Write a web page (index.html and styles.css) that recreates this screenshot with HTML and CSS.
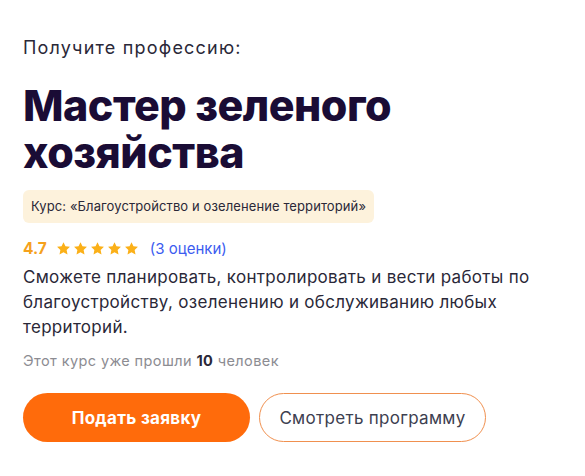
FILE: index.html
```html
<!DOCTYPE html>
<html lang="ru">
<head>
<meta charset="utf-8">
<link rel="stylesheet" href="styles.css">
</head>
<body>
<main class="hero">
  <p class="eyebrow">Получите профессию:</p>
  <h1 class="title">Мастер зеленого хозяйства</h1>
  <div class="badge">Курс: «Благоустройство и озеленение территорий»</div>
  <div class="rating">
    <span class="score">4.7</span>
    <span class="stars">
      <svg viewBox="0 0 24 24"><path d="M12 1.8l3.1 6.6 7.2.9-5.3 5 1.4 7.1L12 17.9l-6.4 3.5 1.4-7.1-5.3-5 7.2-.9z"/></svg>
      <svg viewBox="0 0 24 24"><path d="M12 1.8l3.1 6.6 7.2.9-5.3 5 1.4 7.1L12 17.9l-6.4 3.5 1.4-7.1-5.3-5 7.2-.9z"/></svg>
      <svg viewBox="0 0 24 24"><path d="M12 1.8l3.1 6.6 7.2.9-5.3 5 1.4 7.1L12 17.9l-6.4 3.5 1.4-7.1-5.3-5 7.2-.9z"/></svg>
      <svg viewBox="0 0 24 24"><path d="M12 1.8l3.1 6.6 7.2.9-5.3 5 1.4 7.1L12 17.9l-6.4 3.5 1.4-7.1-5.3-5 7.2-.9z"/></svg>
      <svg viewBox="0 0 24 24"><path d="M12 1.8l3.1 6.6 7.2.9-5.3 5 1.4 7.1L12 17.9l-6.4 3.5 1.4-7.1-5.3-5 7.2-.9z"/></svg>
    </span>
    <a class="reviews" href="#">(3 оценки)</a>
  </div>
  <p class="desc">Сможете планировать, контролировать и вести работы по благоустройству, озеленению и обслуживанию любых территорий.</p>
  <p class="passed">Этот курс уже прошли <b>10</b> человек</p>
  <div class="actions">
    <a class="btn btn-primary" href="#">Подать заявку</a>
    <a class="btn btn-outline" href="#">Смотреть программу</a>
  </div>
</main>
</body>
</html>
```

FILE: styles.css
```css
* { box-sizing: border-box; }
html, body { margin: 0; background: #fff; }
body {
  font-family: Inter, "Noto Sans", sans-serif;
  color: #2a2838;
}
.hero {
  padding: 36px 0 0 23px;
  width: 545px;
}
.eyebrow {
  margin: 0;
  font-size: 18px;
  line-height: 24px;
  font-weight: 400;
  letter-spacing: 1.2px;
  color: #2a2838;
}
.title {
  margin: 22px 0 0;
  font-size: 43px;
  line-height: 47px;
  font-weight: 800;
  color: #1a0c35;
  letter-spacing: -0.5px;
  width: 400px;
}
.badge {
  display: inline-block;
  margin-top: 14px;
  padding: 0 8px;
  height: 33px;
  line-height: 33px;
  background: #fdf2dc;
  border-radius: 6px;
  font-size: 13px;
  letter-spacing: 0.1px;
  color: #2a2838;
}
.rating {
  display: flex;
  align-items: center;
  margin-top: 15px;
  height: 20px;
}
.score {
  font-size: 15.5px;
  font-weight: 700;
  color: #f5a11c;
  margin-right: 9px;
}
.stars { display: flex; gap: 2px; margin-right: 11px; }
.stars svg { width: 15px; height: 15px; fill: #fbb018; }
.reviews {
  font-size: 15px;
  color: #3c5cf0;
  text-decoration: none;
}
.desc {
  margin: 7px 0 0;
  font-size: 17px;
  line-height: 25px;
  letter-spacing: 0.3px;
  color: #2a2838;
}
.passed {
  margin: 12px 0 0;
  font-size: 14.5px;
  letter-spacing: 0.4px;
  color: #8c8c92;
}
.passed b { color: #2a2838; font-weight: 700; }
.actions {
  display: flex;
  gap: 9px;
  margin-top: 24px;
}
.btn {
  display: flex;
  align-items: center;
  justify-content: center;
  width: 227px;
  height: 49px;
  border-radius: 25px;
  font-size: 17px;
  letter-spacing: 0.3px;
  text-decoration: none;
}
.btn-primary {
  background: #ff6b0b;
  color: #fff;
  font-weight: 700;
}
.btn-outline {
  border: 1px solid #f0904f;
  color: #3d4050;
  font-weight: 400;
}
```
